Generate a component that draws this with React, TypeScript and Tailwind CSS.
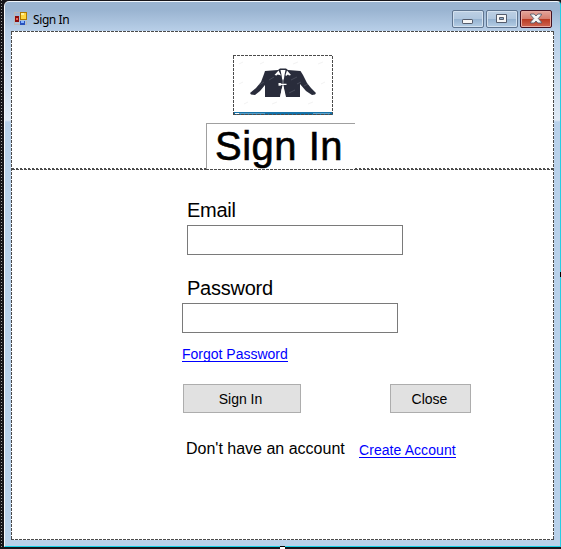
import type { ReactNode } from 'react';

const DASH_X = 'h-px shrink-0 bg-[repeating-linear-gradient(to_right,#4b4b4b_0_3px,#fff_3px_4px)]';
const DASH_Y = 'w-px shrink-0 bg-[repeating-linear-gradient(to_bottom,#4b4b4b_0_3px,#fff_3px_4px)]';

function FormIcon() {
  return (
    <svg width="14" height="14" viewBox="0 0 14 14" shapeRendering="crispEdges">
      <path d="M.5 .5h6v12h-6zM6.5 12.5h6v-4M.5 4.5h6" fill="none" stroke="#bbb9b8" />
      <rect x="6" y="0" width="7" height="8" fill="#b07900" />
      <rect x="7" y="1" width="5" height="6" fill="#ffd63f" />
      <rect x="7" y="1" width="3" height="2" fill="#fff09b" />
      <rect x="1" y="4" width="4" height="6" fill="#8c0d0d" />
      <rect x="2" y="6" width="2" height="2" fill="#ee6550" />
      <rect x="6" y="9" width="5" height="4" fill="#2852bd" />
      <rect x="7" y="9" width="3" height="2" fill="#86b4ff" />
    </svg>
  );
}

function CaptionButton({ danger, label, children }: { danger?: boolean; label: string; children: ReactNode }) {
  return (
    <button
      aria-label={label}
      className={`flex h-[18px] w-8 items-center justify-center rounded-[2px] border ${
        danger
          ? 'border-[#431020] bg-[linear-gradient(#e4a59b_0%,#d77f70_47%,#b93820_50%,#cf6652_100%)] shadow-[inset_0_0_0_1px_#e8aaa0]'
          : 'border-[#5f7590] bg-[linear-gradient(#bdd0e4_0%,#b0c7df_47%,#94b1cf_50%,#b5cee5_100%)] shadow-[inset_0_0_0_1px_#d3e1ef]'
      }`}
    >
      {children}
    </button>
  );
}

function TitleBar() {
  return (
    <header className="flex h-[29px] shrink-0 items-start pr-[8px] pl-[9px]">
      <div className="mt-[10px]"><FormIcon /></div>
      <h1 className="mt-[9px] ml-[5px] font-['Noto_Sans','Open_Sans',sans-serif] text-[12px] leading-[18px] tracking-[-0.4px] text-black">Sign In</h1>
      <div className="mt-[8px] ml-auto flex gap-[2px]">
        <CaptionButton label="Minimize">
          <svg width="12" height="12" viewBox="0 0 12 12"><rect x=".5" y="6.5" width="10" height="4" rx=".6" fill="#f6f6f6" stroke="#545c6c" /></svg>
        </CaptionButton>
        <CaptionButton label="Maximize">
          <svg width="12" height="12" viewBox="0 0 12 12"><path d="M.5 1.5h10v8H.5z" fill="#f6f6f6" stroke="#545c6c" /><path d="M3.5 4.5h4v2h-4z" fill="#8faeca" stroke="#545c6c" /></svg>
        </CaptionButton>
        <CaptionButton label="Close window" danger>
          <svg width="12" height="12" viewBox="0 0 12 12"><path d="M.6 1h3.6L6 3l1.8-2h3.6v1L8.3 5.5l3.1 3.5v1H7.8L6 8l-1.8 2H.6V9l3.1-3.5L.6 2z" fill="#f5f5f5" stroke="#555b6b" strokeWidth=".9" /></svg>
        </CaptionButton>
      </div>
    </header>
  );
}

function Logo() {
  return (
    <div className="flex h-[60px] w-[100px] flex-col">
      <div className={DASH_X} />
      <div className="flex min-h-0 flex-1">
        <div className={DASH_Y} />
        <div className="flex flex-1 flex-col">
          <svg width="98" height="56" viewBox="0 0 98 56">
            <path d="M31 15 44 14l2-1.5h6l2 1.5 12.5 1 2.5 4 4 8 4 5 5 5-1 1.5-3 .5-6-4-6-7v13H52l-3-13-3 13H31V29l-5 6-5 4-4-.5-1-1.5 6-5 5-6 3-8z" fill="#292c3b" />
            <path d="M46.5 14h5l-1 5L49 28.5 47.5 19z" fill="#fff" />
            <path d="m44.5 14.5 2.5 5-1.5-.5-2-.5-.8 1-2.2-.5zM53 14.5l4 4.5-2 .5-1-1-2 1.5-.5-1z" fill="#fff" />
            <path d="m49 28.5 1 5 1.5 8.5H46l1.5-8.5z" fill="#fff" />
            <path d="M44.5 27h2l1 .8h5v1.2h-5l-1 .7h-2z" fill="#fff" />
            <path d="M48.5 23.5h1v3h-1zM51 34h1v1h-1z" fill="#292c3b" />
            <g stroke="#777c88" strokeWidth=".6" opacity=".65"><path d="m25 29 5-3M57 24l6-3M70 30l4-2M55 37l6-3M63 28l4-2M35 24l5-3" /></g>
            <g stroke="#ededed" strokeWidth=".7"><path d="m5 8 4-2m17 2 4-2m29 2 5-2m20 2 5-2M10 48l4-2m24 2 5-2m31 2 5-2M5 28l4-2m78 2 4-2" /></g>
          </svg>
          <div className="h-px bg-[#1673aa]" />
          <div className="h-px bg-[linear-gradient(to_right,#1673aa_0_1px,#f5f9fb_1px_5px,#5b9dc3_5px_31px,#1673aa_31px_79px,#64a3c8_79px_96px,#1673aa_96px)]" />
        </div>
        <div className={DASH_Y} />
      </div>
      <div className="h-px shrink-0 bg-[repeating-linear-gradient(to_right,#4b4b4b_0_3px,#1475ab_3px_4px)]" />
    </div>
  );
}

function HeaderPanel() {
  return (
    <section className="flex h-[138px] shrink-0 flex-col">
      <div className="mt-[23px] ml-[221px]"><Logo /></div>
      <div className="mt-[8px] flex flex-1">
        <div className="flex w-[194px] flex-col justify-end">
          <div className="h-px bg-[repeating-linear-gradient(to_right,#4b4b4b_0_2px,#fff_2px_4px)]" />
          <div className={DASH_X} />
        </div>
        <div className="flex w-[149px] flex-col">
          <div className="flex flex-1 border-t border-l border-[#a0a0a0] pl-2">
            <h2 className="h-[45px] text-[40px] leading-[45px] tracking-[0.5px] whitespace-nowrap [-webkit-text-stroke:0.6px_black]">Sign In</h2>
          </div>
          <div className={DASH_X} />
        </div>
        <div className="flex flex-1 flex-col justify-end">
          <div className="h-px bg-[repeating-linear-gradient(to_right,#4b4b4b_0_2px,#fff_2px_4px)]" />
          <div className={DASH_X} />
        </div>
      </div>
    </section>
  );
}

function SignInForm() {
  return (
    <form className="flex flex-1 flex-col items-start pl-[170px]" onSubmit={(event) => event.preventDefault()}>
      <label htmlFor="email" className="mt-[28px] ml-[5px] text-[20px] leading-6 tracking-[-0.25px]">Email</label>
      <input id="email" className="mt-[3px] ml-[5px] h-[30px] w-[216px] border border-[#7a7a7a] bg-white px-1 outline-none" />
      <label htmlFor="password" className="mt-[21px] ml-[5px] text-[20px] leading-6 tracking-[-0.25px]">Password</label>
      <input id="password" type="password" className="mt-[3px] h-[30px] w-[216px] border border-[#7a7a7a] bg-white px-1 outline-none" />
      <a href="#forgot" className="mt-[13px] h-4 border-b border-[#0000ff] text-[14px] leading-[17px] text-[#0000ff]">Forgot Password</a>
      <div className="mt-[22px] ml-px flex">
        <button type="submit" className="h-[29px] w-[118px] border border-[#adadad] bg-[#e1e1e1] pt-px pr-[3px] text-[14px]">Sign In</button>
        <button type="button" className="ml-[89px] h-[29px] w-[81px] border border-[#adadad] bg-[#e1e1e1] pt-px pr-[2px] text-[14px]">Close</button>
      </div>
      <div className="mt-[26px] ml-[4px] flex items-start whitespace-nowrap">
        <span className="w-[173px] text-[16px] leading-5">Don't have an account</span>
        <a href="#create" className="mt-[3px] h-4 border-b border-[#0000ff] text-[14px] leading-[17px] tracking-[0.07px] text-[#0000ff]">Create Account</a>
      </div>
    </form>
  );
}

export default function App() {
  return (
    <div className="relative h-[549px] w-[561px] overflow-hidden bg-[#17151a] pt-px pl-[4px] font-['Liberation_Sans',Arial,sans-serif] text-black">
      <div className="absolute top-0 left-px h-full w-px bg-[repeating-linear-gradient(to_bottom,#9a9a9a_0_1px,#151515_1px_3px)]" />
      <div className="flex h-[546px] w-[557px] flex-col rounded-tl-[5px] rounded-tr-[4px] border-t border-r border-b border-l border-t-[#f0f6fc] border-r-[#28cde4] border-b-[#18cfe7] border-l-[#f4f6f9] bg-[linear-gradient(to_bottom,#9ab4d1_0_8px,#b8cfe8_29px,#e0eaf5_118px,#b9d1ea_120px)]">
        <TitleBar />
        <main className="mr-[6px] ml-[6px] flex h-[509px] w-[543px] flex-col bg-white">
          <div className={DASH_X} />
          <div className="flex min-h-0 flex-1">
            <div className={DASH_Y} />
            <div className="flex min-w-0 flex-1 flex-col">
              <HeaderPanel />
              <SignInForm />
            </div>
            <div className={DASH_Y} />
          </div>
          <div className={DASH_X} />
        </main>
      </div>
      <div className="absolute top-[546px] left-[280px] h-[3px] w-[5px] border-t border-black bg-white" />
      <div className="absolute top-[272px] left-[560px] h-[5px] w-px bg-black" />
    </div>
  );
}
